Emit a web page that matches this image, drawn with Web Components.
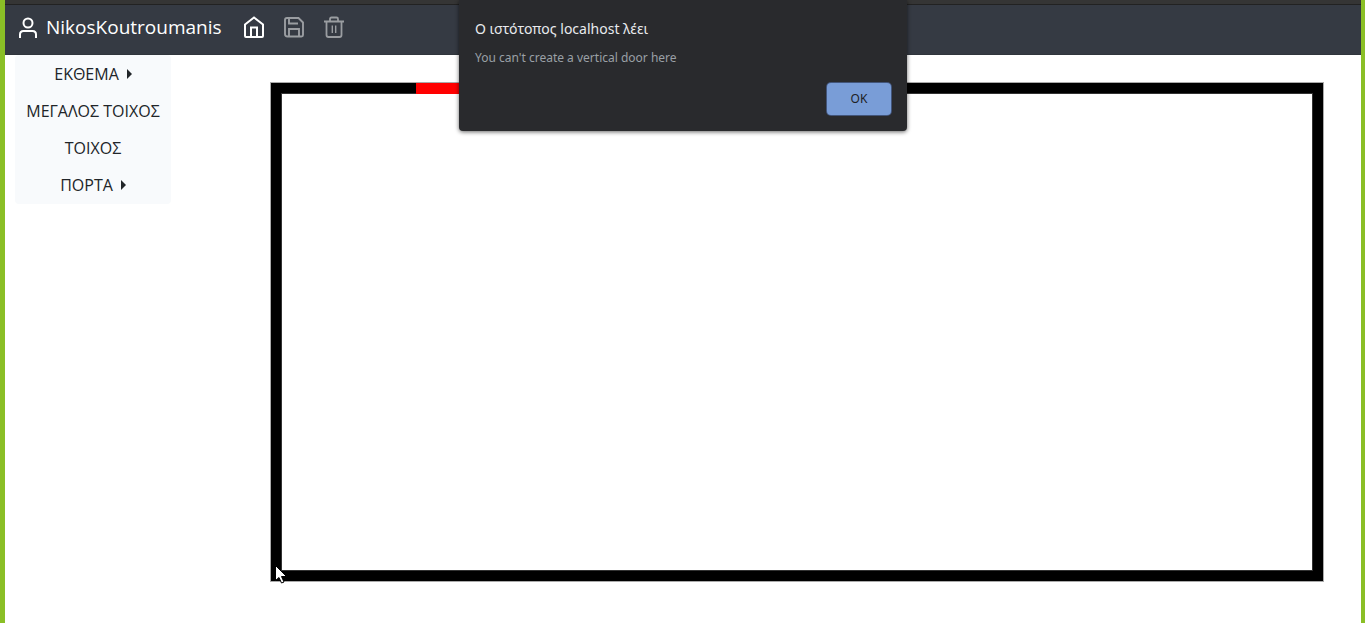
<!DOCTYPE html>
<html lang="el">
<head>
<meta charset="utf-8">
<meta name="viewport" content="width=device-width, initial-scale=1">
<title>Museum designer</title>
<style>
  html, body { margin: 0; }
  body { background: #fff; color: #212529; font-family: "Open Sans", "Noto Sans", sans-serif; }
</style>
</head>
<body>
<museum-app></museum-app>
<script>
const define = (name, html) => {
  const template = document.createElement('template');
  template.innerHTML = html;
  customElements.define(name, class extends HTMLElement {
    constructor() {
      super();
      this.attachShadow({ mode: 'open' }).append(template.content.cloneNode(true));
    }
  });
};

define('user-brand', `
  <style>
    :host { display: block; }
    a { display: flex; align-items: center; gap: 8px; color: #fff; text-decoration: none; white-space: nowrap; font: 19px/30px "Open Sans", "Noto Sans", sans-serif; }
    svg { display: block; flex: none; margin-top: 3px; }
  </style>
  <a href="#"><svg width="20" height="22" viewBox="0 0 20 22" fill="none" stroke="#fff" stroke-width="2" aria-hidden="true"><circle cx="10" cy="6" r="4.5"/><path d="M2 21v-3.5Q2 14 5.500 14h9Q18 14 18 17.500V21"/></svg><slot></slot></a>`);

define('tool-icon', `
  <style>
    :host { display: block; color: #9a9da1; }
    :host([active]) { color: #fff; }
    button { display: block; padding: 0; border: 0; background: none; color: inherit; }
    ::slotted(svg) { display: block; }
  </style>
  <button type="button"><slot></slot></button>`);

define('top-bar', `
  <style>
    :host { display: flex; align-items: center; gap: 20px; height: 50px; padding: 0 13px 6px; box-sizing: border-box; background: #353a43; border-bottom: 1px solid #30353c; }
    nav { display: flex; gap: 16px; }
  </style>
  <user-brand>NikosKoutroumanis</user-brand>
  <nav>
    <tool-icon active><svg role="img" aria-label="Home" width="24" height="24" viewBox="0 0 24 24" fill="none" stroke="currentColor" stroke-width="2"><path d="M3 9.500 12 2.500l9 7V21q0 1-1 1H4q-1 0-1-1Z"/><path d="M9 22v-9.500h6V22"/></svg></tool-icon>
    <tool-icon><svg role="img" aria-label="Save" width="24" height="24" viewBox="0 0 24 24" fill="none" stroke="currentColor" stroke-width="1.900"><path d="M5 3h11.500L21 7.500V20q0 1.500-1.500 1.500h-14Q3 21.500 3 19V5q0-2 2-2Z"/><path d="M7 3v5.500h9M7 21.500V14h10v7.500"/></svg></tool-icon>
    <tool-icon><svg role="img" aria-label="Delete" width="24" height="24" viewBox="0 0 24 24" fill="none" stroke="currentColor" stroke-width="1.800"><path d="M2 6.500h20M8 6.500V4q0-1.500 1.500-1.500h5Q16 2.500 16 4v2.500M4.500 6.500V20q0 2 2 2h11q2 0 2-2V6.500"/><path d="M10.300 10.500v7.500M13.700 10.500v7.500" stroke-width="1.400"/></svg></tool-icon>
  </nav>`);

define('menu-item', `
  <style>
    :host { display: block; }
    button { display: flex; width: 100%; height: 37px; align-items: center; justify-content: center; gap: 8px; padding: 0 4px; border: 0; background: none; color: #212529; font: 16px/24px "Open Sans", "Noto Sans", sans-serif; white-space: nowrap; }
    i { display: none; border: 5px solid transparent; border-left-color: #212529; border-right: 0; }
    :host([expands]) i { display: block; }
  </style>
  <button type="button"><slot></slot><i></i></button>`);

define('build-menu', `
  <style>
    :host { display: block; padding-bottom: 1px; background: #f8fafc; border-radius: 4px; }
  </style>
  <slot></slot>`);

define('floor-plan', `
  <style>
    :host { display: block; position: relative; box-sizing: border-box; border: 1px solid #aaa; background: #000; padding: 10px; }
    .floor { height: 100%; box-sizing: border-box; background: #fff; border: 1px solid #333; }
    .door { position: absolute; left: 145px; top: 0; width: 80px; height: 11px; background: #f00; }
    .pointer { position: absolute; left: 4px; bottom: -3px; }
  </style>
  <div class="floor"></div>
  <div class="door"></div>
  <svg class="pointer" width="13" height="19" viewBox="0 0 13 19" aria-hidden="true"><path d="M.5.5v15l3.500-3 2.500 5.500 2.500-1L6.500 11.500h5Z" fill="#fff" stroke="#000"/></svg>`);

define('alert-dialog', `
  <style>
    :host { display: block; position: absolute; top: 0; left: 50%; width: 448px; margin-left: -224px; }
    dialog { display: block; position: static; box-sizing: border-box; width: 100%; margin: 0; padding: 16px; border: 0; border-radius: 0 0 4px 4px; background: #292a2d; color: #e8eaed; box-shadow: 0 1px 4px #0009; }
    h1 { margin: 0 0 6px; font: 14px/26px "Noto Sans", sans-serif; }
    p { margin: 0 0 15px; color: #9aa0a6; font: 12px/20px "Noto Sans", sans-serif; }
    form { display: flex; justify-content: flex-end; }
    button { box-sizing: border-box; width: 64px; height: 32px; padding: 0; border: 0; border-radius: 4px; background: #799dd7; color: #202124; box-shadow: 0 0 0 1px #42557a; font: 12px/20px "Noto Sans", sans-serif; outline: 0; }
  </style>
  <dialog open aria-labelledby="origin">
    <h1 id="origin"><slot name="origin"></slot></h1>
    <p><slot></slot></p>
    <form method="dialog"><button>OK</button></form>
  </dialog>`);

define('museum-app', `
  <style>
    :host { display: flex; flex-direction: column; position: relative; box-sizing: border-box; min-height: 100vh; overflow: hidden; border: solid #8abf26; border-width: 0 4px 0 5px; }
    .edge { height: 4px; background: #353535; border-bottom: 1px solid #222; }
    main { flex: 1; display: grid; grid-template-columns: 156px minmax(0, 1fr); gap: 99px; padding: 0 37px 0 10px; }
    build-menu { align-self: start; }
    floor-plan { margin: 27px 0 41px; min-height: 200px; }
  </style>
  <div class="edge"></div>
  <top-bar></top-bar>
  <main>
    <build-menu>
      <menu-item expands>ΕΚΘΕΜΑ</menu-item>
      <menu-item>ΜΕΓΑΛΟΣ ΤΟΙΧΟΣ</menu-item>
      <menu-item>ΤΟΙΧΟΣ</menu-item>
      <menu-item expands>ΠΟΡΤΑ</menu-item>
    </build-menu>
    <floor-plan></floor-plan>
  </main>
  <alert-dialog><span slot="origin">Ο ιστότοπος localhost λέει</span>You can't create a vertical door here</alert-dialog>`);
</script>
</body>
</html>
